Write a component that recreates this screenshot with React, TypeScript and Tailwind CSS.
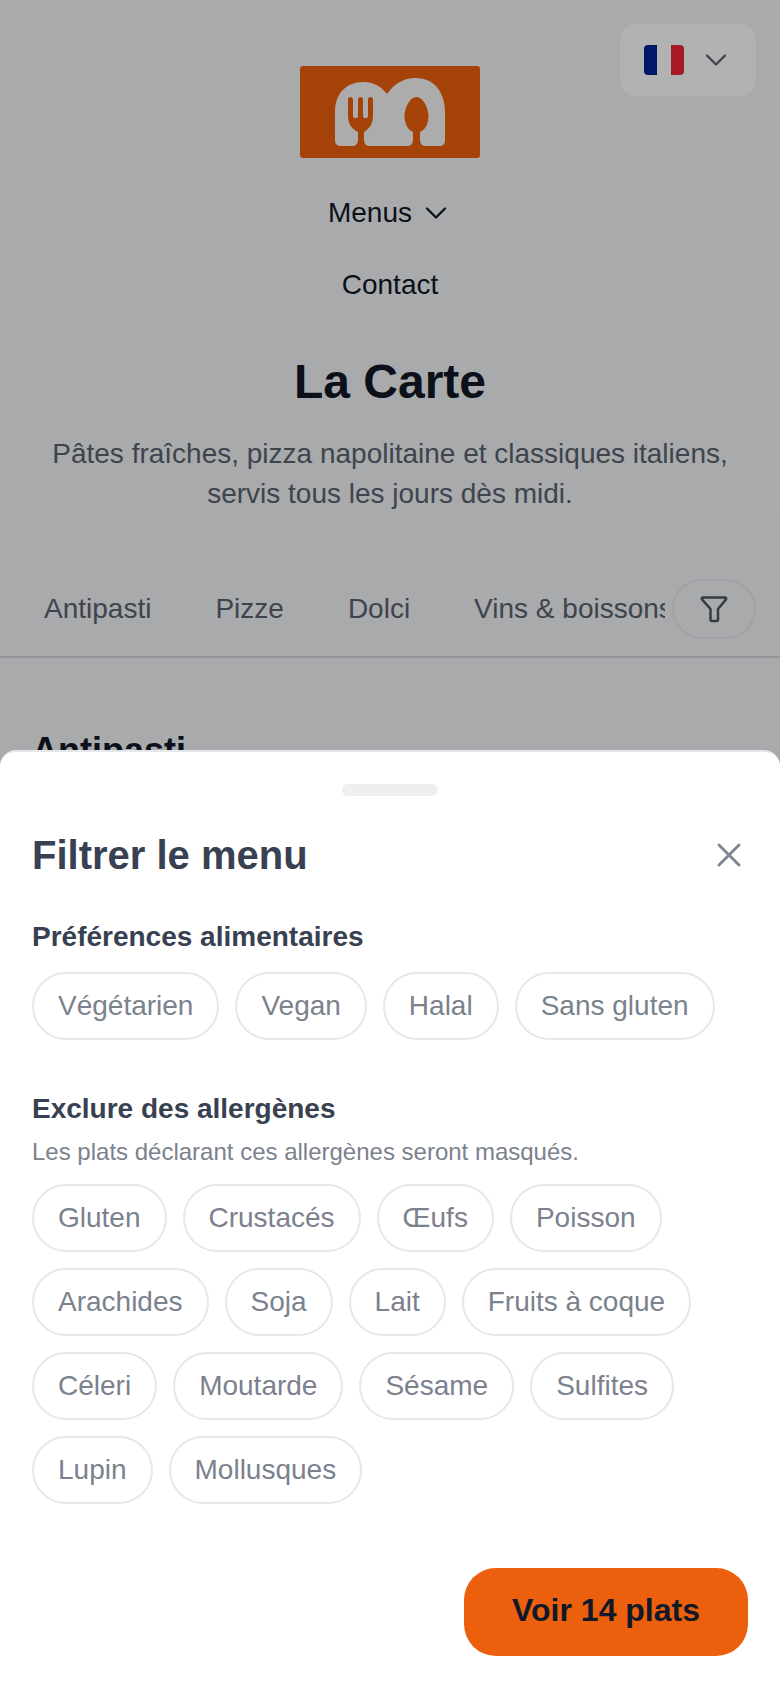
import {ChevronDown, X} from "lucide-react";

const dietChips = ["Végétarien", "Vegan", "Halal", "Sans gluten"];
const allergenChips = [
    "Gluten",
    "Crustacés",
    "Œufs",
    "Poisson",
    "Arachides",
    "Soja",
    "Lait",
    "Fruits à coque",
    "Céleri",
    "Moutarde",
    "Sésame",
    "Sulfites",
    "Lupin",
    "Mollusques",
];
const tabs = ["Antipasti", "Pizze", "Dolci", "Vins & boissons"];

function Chip({label}: {label: string}) {
    return (
        <button className="h-[68px] px-6 rounded-full border-2 border-[#e5e7eb] bg-white text-[28px] text-[#7b818d] whitespace-nowrap">
            {label}
        </button>
    );
}

function Logo() {
    return (
        <div className="w-[180px] h-[92px] bg-[#ec5f0c] rounded-[3px]">
            <svg width="180" height="92" viewBox="0 0 180 92">
                <path
                    d="M41 80C37 80 35 78 35 74V46C35 28 46 16 63 16C73 16 81 20 87 28C94 18 103 12 116 12C134 12 145 26 145 46V74C145 78 143 80 139 80Z"
                    className="fill-[#f6f6f6]"
                />
                <path
                    d="M48 33.5C48 30 53 30 53 33.5V50C53 53 58 53 58 50V33.5C58 30 63 30 63 33.5V50C63 53 68 53 68 50V33.5C68 30 73 30 73 33.5V50C73 58 69 63 64 66V74C64 77 66 80 69 80H53C56 80 58 77 58 74V66C52 63 48 58 48 50Z"
                    className="fill-[#ec5f0c]"
                />
                <path
                    d="M116.5 31C123 31 128.5 42 128.5 50C128.5 58 125 64 120 66V74C120 77 122 80 125 80H108C111 80 113 77 113 74V66C108 64 104.5 58 104.5 50C104.5 42 110 31 116.5 31Z"
                    className="fill-[#ec5f0c]"
                />
            </svg>
        </div>
    );
}

function App() {
    return (
        <div className="relative h-[1688px] w-[780px] overflow-hidden bg-[#f3f4f6] font-['Liberation_Sans',sans-serif]">
            <div className="flex flex-col items-center pt-[66px]">
                <Logo />
                <nav className="mt-[35px] flex flex-col items-center gap-[32px] text-[28px] leading-[40px] text-[#111827]">
                    <a className="flex items-center gap-[6px] pl-[2px]">
                        Menus
                        <ChevronDown size={36} strokeWidth={1.5} />
                    </a>
                    <a>Contact</a>
                </nav>
                <h1 className="mt-[45px] text-[48px] leading-[64px] font-bold text-[#111827]">
                    La Carte
                </h1>
                <p className="mt-[20px] w-[716px] text-center text-[28px] leading-[40px] text-[#5a6270]">
                    Pâtes fraîches, pizza napolitaine et classiques italiens,
                    servis tous les jours dès midi.
                </p>
            </div>

            <div className="mt-[47px] flex items-center h-[97px] border-b-2 border-[#d1d5db]">
                <div className="flex w-[665px] overflow-hidden pl-[12px] text-[28px] text-[#5a6270] whitespace-nowrap">
                    {tabs.map((tab) => (
                        <span key={tab} className="px-[32px]">
                            {tab}
                        </span>
                    ))}
                </div>
                <button className="ml-[7px] w-[84px] h-[60px] rounded-full border-2 border-[#e5e7eb] flex items-center justify-center text-[#4b5563]">
                    <svg width="28" height="28" viewBox="0 0 28 28" fill="none" stroke="currentColor" strokeWidth="2.5" strokeLinejoin="round">
                        <path d="M3 2.5H25C26 2.5 26.5 3.5 26 4.4L18 14V24.5C18 25.5 17.5 26 16.5 26H12C11 26 10.5 25.5 10.5 24.5V14L2 4.4C1.5 3.5 2 2.5 3 2.5Z" />
                    </svg>
                </button>
            </div>

            <h2 className="mt-[69px] px-[32px] text-[36px] leading-[48px] font-bold text-[#111827]">
                Antipasti
            </h2>

            {/* language switcher */}
            <button className="absolute top-[24px] right-[24px] w-[136px] h-[72px] rounded-[16px] bg-white flex items-center pl-[24px]">
                <span className="w-[40px] h-[30px] rounded-[4px] overflow-hidden flex">
                    <span className="flex-1 bg-[#002395]" />
                    <span className="flex-1 bg-white" />
                    <span className="flex-1 bg-[#ed2939]" />
                </span>
                <ChevronDown size={36} strokeWidth={1.5} className="ml-[14px] text-[#5a6270]" />
            </button>

            <div className="absolute inset-0 bg-black/30" />

            {/* filter sheet */}
            <div className="absolute inset-x-0 bottom-0 h-[938px] bg-white rounded-t-[16px] px-[32px] pt-[32px] border-t-2 border-[#e5e7eb]">
                <div className="mx-auto w-[96px] h-[12px] rounded-full bg-[#eeeff1]" />
                <div className="mt-[29px] flex items-center justify-between">
                    <h2 className="text-[40px] leading-[60px] font-bold text-[#374151]">
                        Filtrer le menu
                    </h2>
                    <X size={40} strokeWidth={1.75} className="text-[#7b8490] -mr-[1px]" />
                </div>

                <h3 className="mt-[32px] text-[28px] leading-[40px] font-bold text-[#374151]">
                    Préférences alimentaires
                </h3>
                <div className="mt-[15px] flex flex-wrap gap-[16px]">
                    {dietChips.map((chip) => (
                        <Chip key={chip} label={chip} />
                    ))}
                </div>

                <h3 className="mt-[49px] text-[28px] leading-[40px] font-bold text-[#374151]">
                    Exclure des allergènes
                </h3>
                <p className="mt-[5px] text-[24px] leading-[36px] text-[#7b818d]">
                    Les plats déclarant ces allergènes seront masqués.
                </p>
                <div className="mt-[14px] flex flex-wrap gap-[16px]">
                    {allergenChips.map((chip) => (
                        <Chip key={chip} label={chip} />
                    ))}
                </div>

                <div className="mt-[64px] flex justify-end">
                    <button className="h-[88px] px-[48px] pb-[4px] rounded-[32px] bg-[#ec5f0c] text-[32px] font-bold text-[#111827]">
                        Voir 14 plats
                    </button>
                </div>
            </div>
        </div>
    );
}

export default App;
